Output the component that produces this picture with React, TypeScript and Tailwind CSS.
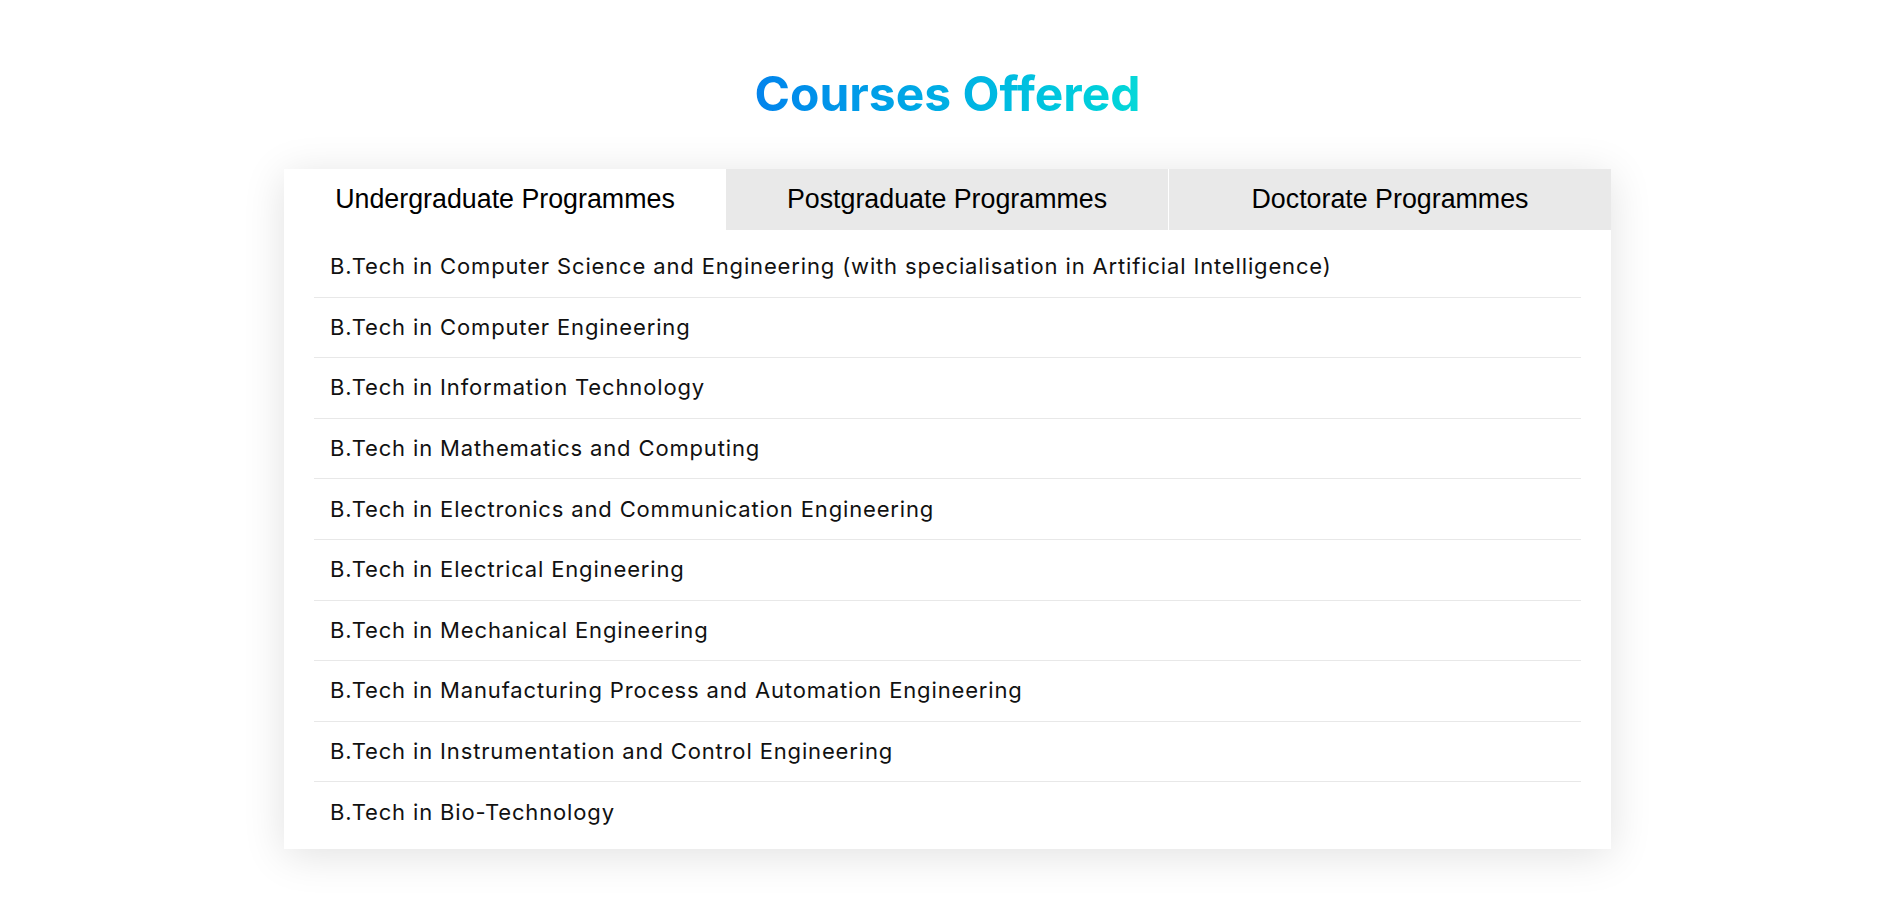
const tabs = ["Undergraduate Programmes", "Postgraduate Programmes", "Doctorate Programmes"];

const courses = [
  "B.Tech in Computer Science and Engineering (with specialisation in Artificial Intelligence)",
  "B.Tech in Computer Engineering",
  "B.Tech in Information Technology",
  "B.Tech in Mathematics and Computing",
  "B.Tech in Electronics and Communication Engineering",
  "B.Tech in Electrical Engineering",
  "B.Tech in Mechanical Engineering",
  "B.Tech in Manufacturing Process and Automation Engineering",
  "B.Tech in Instrumentation and Control Engineering",
  "B.Tech in Bio-Technology",
];

export default function App() {
  const active = 0;

  return (
    <div className="min-h-[898px] w-full bg-white">
      <div className="ml-[284px] w-[1327px] pt-[62px]">
        <h2 className="text-center font-['Inter',sans-serif] text-[48px] font-bold leading-[64px]">
          <span className="bg-gradient-to-r from-[#0583ec] to-[#08d8d8] bg-clip-text text-transparent">
            Courses Offered
          </span>
        </h2>

        <div className="mt-[43px] bg-white shadow-[0_6px_40px_rgba(0,0,0,0.12)]">
          <div className="flex h-[61px] font-['Liberation_Sans',Arial,sans-serif] text-[26.8px] text-black">
            {tabs.map((tab, i) => (
              <div
                key={tab}
                className={
                  "flex flex-1 items-center justify-center " +
                  (i === active ? "bg-white" : "bg-[#e9e9e9]") +
                  (i > 1 ? " border-l border-white" : "")
                }
              >
                {tab}
              </div>
            ))}
          </div>

          <ul className="px-[30px] pt-[7px] pb-[6px] font-['Inter',sans-serif] text-[22px] tracking-[0.85px] text-[#111111]">
            {courses.map((course, i) => (
              <li
                key={course}
                className={
                  "flex h-[60.6px] items-center pl-4 " +
                  (i < courses.length - 1 ? "border-b border-[#e8e8e8]" : "")
                }
              >
                {course}
              </li>
            ))}
          </ul>
        </div>
      </div>
    </div>
  );
}
